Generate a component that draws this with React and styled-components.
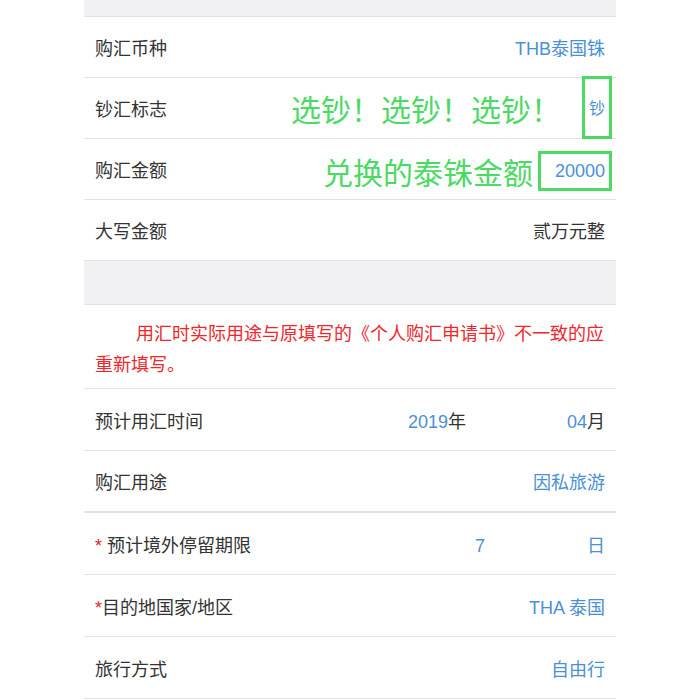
import styled, { createGlobalStyle } from "styled-components";

const GlobalStyle = createGlobalStyle`
  body {
    margin: 0;
    background: #fff;
    font-family: "Liberation Sans", "Noto Sans CJK SC", sans-serif;
  }
`

const Panel = styled.div`
  width: 532px;
  margin: 0 auto;
`

const Band = styled.div`
  box-sizing: border-box;
  height: ${p => p.h}px;
  background: #f1f1f4;
  border-bottom: 1px solid #e1e1e6;
`

const Row = styled.div`
  box-sizing: border-box;
  height: ${p => p.h || 61}px;
  display: flex;
  align-items: center;
  padding: 0 11px;
  background: #fff;
  border-bottom: ${p => p.thick ? 2 : 1}px solid #e1e1e6;
  font-size: 18px;
`

const Label = styled.span`
  color: #333;
  white-space: nowrap;
`

const Star = styled.span`
  color: #e8202a;
`

const Value = styled.span`
  margin-left: auto;
  color: ${p => p.dark ? "#333" : "#4a90d6"};
  white-space: nowrap;
`

const Unit = styled.span`
  color: #333;
`

const Pair = styled.div`
  margin-left: auto;
  display: flex;
  align-items: baseline;
  gap: ${p => p.gap}px;
  color: #4a90d6;
  white-space: nowrap;
`

const Annot = styled.span`
  margin-left: auto;
  margin-right: ${p => p.gap}px;
  color: #4cd964;
  font-size: 30px;
  font-family: "Noto Sans CJK SC", sans-serif;
  white-space: nowrap;
  position: relative;
  top: ${p => p.shift || 0}px;
`

const Boxed = styled.span`
  box-sizing: border-box;
  width: ${p => p.w}px;
  height: ${p => p.h}px;
  margin-right: -7px;
  border: 3px solid #4cd964;
  display: flex;
  align-items: center;
  justify-content: ${p => p.right ? "flex-end" : "center"};
  padding-right: ${p => p.right ? 4 : 0}px;
  color: #4a90d6;
  font-size: ${p => p.fs}px;
  position: relative;
  top: ${p => p.shift || 0}px;
`

const Note = styled.div`
  box-sizing: border-box;
  height: 84px;
  padding: 12px 10px 0 11px;
  background: #fff;
  border-bottom: 1px solid #e1e1e6;
  color: #f0262a;
  font-size: 18px;
  line-height: 31px;
  text-indent: 41px;
  font-family: "Noto Sans CJK SC", sans-serif;
`

export default function App() {
  return (
    <>
      <GlobalStyle />
      <Panel>
        <Band h={17} />
        <Row>
          <Label>购汇币种</Label>
          <Value>THB泰国铢</Value>
        </Row>
        <Row>
          <Label>钞汇标志</Label>
          <Annot gap={21}>选钞！选钞！选钞！</Annot>
          <Boxed w={30} h={63} fs={16} shift={-1}>钞</Boxed>
        </Row>
        <Row>
          <Label>购汇金额</Label>
          <Annot gap={5} shift={2}>兑换的泰铢金额</Annot>
          <Boxed w={74} h={40} fs={18} right shift={2}>20000</Boxed>
        </Row>
        <Row>
          <Label>大写金额</Label>
          <Value dark>贰万元整</Value>
        </Row>
        <Band h={44} />
        <Note>用汇时实际用途与原填写的《个人购汇申请书》不一致的应重新填写。</Note>
        <Row h={62}>
          <Label>预计用汇时间</Label>
          <Pair gap={101}>
            <span>2019<Unit>年</Unit></span>
            <span>04<Unit>月</Unit></span>
          </Pair>
        </Row>
        <Row h={62} thick>
          <Label>购汇用途</Label>
          <Value>因私旅游</Value>
        </Row>
        <Row h={62}>
          <Label><Star>* </Star>预计境外停留期限</Label>
          <Pair gap={102}>
            <span>7</span>
            <span>日</span>
          </Pair>
        </Row>
        <Row h={62}>
          <Label><Star>*</Star>目的地国家/地区</Label>
          <Value>THA 泰国</Value>
        </Row>
        <Row h={62}>
          <Label>旅行方式</Label>
          <Value>自由行</Value>
        </Row>
      </Panel>
    </>
  );
}
